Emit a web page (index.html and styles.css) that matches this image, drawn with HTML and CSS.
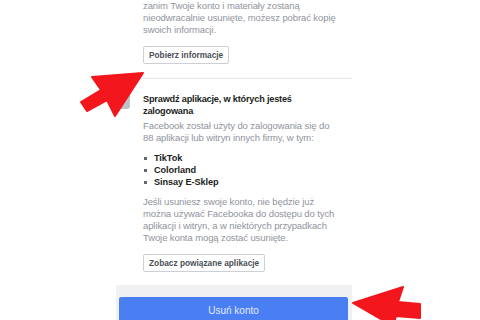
FILE: index.html
```html
<!DOCTYPE html>
<html lang="pl">
  <head>
    <meta charset="UTF-8" />
    <meta name="viewport" content="width=device-width, initial-scale=1.0" />
    <title>Usuń konto</title>
    <link rel="stylesheet" href="styles.css">
  </head>
  <body>
    <div class="panel">
      <div class="section">
        <div class="section-icon"></div>
        <div class="section-body">
          <p class="text">
            Jeśli chcesz zachować swoje zdjęcia i posty,<br>
            zanim Twoje konto i materiały zostaną<br>
            nieodwracalnie usunięte, możesz pobrać kopię<br>
            swoich informacji.
          </p>
          <button class="plain-btn">Pobierz informacje</button>
        </div>
      </div>

      <div class="section section-last">
        <div class="section-icon"><div class="app-icon"></div></div>
        <div class="section-body">
          <h2>Sprawdź aplikacje, w których jesteś<br>zalogowana</h2>
          <p class="text">
            Facebook został użyty do zalogowania się do<br>
            88 aplikacji lub witryn innych firmy, w tym:
          </p>
          <ul class="apps">
            <li>TikTok</li>
            <li>Colorland</li>
            <li>Sinsay E-Sklep</li>
          </ul>
          <p class="text">
            Jeśli usuniesz swoje konto, nie będzie już<br>
            można używać Facebooka do dostępu do tych<br>
            aplikacji i witryn, a w niektórych przypadkach<br>
            Twoje konta mogą zostać usunięte.
          </p>
          <button class="plain-btn">Zobacz powiązane aplikacje</button>
        </div>
      </div>

      <div class="footer">
        <button class="delete-btn">Usuń konto</button>
      </div>
    </div>

    <!-- strzałki z zrzutu ekranu -->
    <svg class="marks" width="480" height="320" viewBox="0 0 480 320">
      <polygon points="143,73 92,77 101,90 81,102 87,111 107,100 115,116" />
      <polygon points="353,303 403,287 398,302 420,304 420,318 396,316 393,326" />
    </svg>
  </body>
</html>
```

FILE: styles.css
```css
body {
  margin: 0;
  font-family: "Liberation Sans", Arial, sans-serif;
  background-color: white;
  overflow: hidden;
}

.panel {
  width: 236px;
  margin-left: 116px;
  margin-top: -12px;
}

.section {
  display: flex;
  gap: 6px;
  padding-bottom: 14px;
  border-bottom: 1px solid #e4e6e9;
  margin-bottom: 14px;
}

.section-last {
  border-bottom: none;
  margin-bottom: 0;
  padding-bottom: 13px;
}

.section-icon {
  width: 21px;
  flex-shrink: 0;
}

.app-icon {
  width: 14px;
  height: 16px;
  border-radius: 3px;
  background-color: #bfc3c8;
}

.section-body {
  flex: 1;
  white-space: nowrap;
}

h2 {
  margin: 0 0 3px;
  font-size: 9.2px;
  line-height: 12px;
  letter-spacing: -0.2px;
  font-weight: bold;
  color: #1c1e21;
}

.text {
  margin: 0;
  font-size: 9.5px;
  line-height: 12px;
  letter-spacing: -0.1px;
  color: #90949c;
}

.apps {
  list-style: none;
  margin: 8px 0;
  padding: 0;
}

.apps li {
  position: relative;
  padding-left: 11px;
  font-size: 9.2px;
  line-height: 12px;
  letter-spacing: -0.1px;
  font-weight: bold;
  color: #1c1e21;
}

.apps li::before {
  content: "";
  position: absolute;
  left: 1px;
  top: 5px;
  width: 3px;
  height: 3px;
  background-color: #606770;
}

.plain-btn {
  margin-top: 10px;
  height: 18px;
  padding: 0 5px;
  border: 1px solid #ccd0d5;
  border-radius: 2px;
  background-color: white;
  font-family: inherit;
  font-size: 8.3px;
  font-weight: bold;
  color: #4b4f56;
}

.footer {
  background-color: #f0f1f3;
  padding: 12px 4px 0 3px;
}

.delete-btn {
  display: block;
  width: 100%;
  height: 26px;
  border: none;
  border-radius: 2px;
  background-color: #4a7ef3;
  font-family: inherit;
  font-size: 10px;
  color: #e3eafc;
}

.marks {
  position: absolute;
  top: 0;
  left: 0;
  pointer-events: none;
}

.marks polygon {
  fill: #f3161c;
  stroke: #f3161c;
  stroke-width: 2;
  stroke-linejoin: round;
}
```
